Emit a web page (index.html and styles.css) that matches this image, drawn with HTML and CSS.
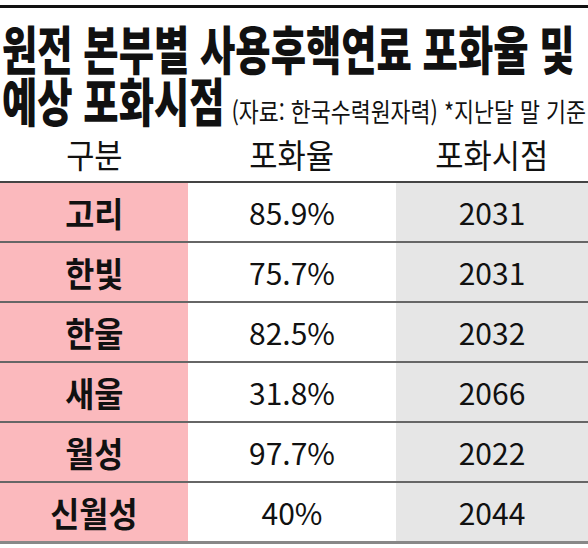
FILE: index.html
```html
<!DOCTYPE html>
<html lang="ko">

<head>
  <meta charset="UTF-8">
  <meta name="viewport" content="width=device-width, initial-scale=1.0">
  <link rel="stylesheet" href="styles.css">
</head>

<body>
  <div class="top-rule"></div>

  <h1 class="title">
    <span class="title-line">원전 본부별 사용후핵연료 포화율 및</span>
    <span class="title-line">예상 포화시점<span class="source">(자료: 한국수력원자력) *지난달 말 기준</span></span>
  </h1>

  <table class="stats">
    <colgroup>
      <col class="col-name">
      <col class="col-rate">
      <col class="col-year">
    </colgroup>
    <thead>
      <tr>
        <th><span class="head">구분</span></th>
        <th><span class="head">포화율</span></th>
        <th><span class="head">포화시점</span></th>
      </tr>
    </thead>
    <tbody>
      <tr>
        <td class="name"><span class="label">고리</span></td>
        <td class="rate">85.9%</td>
        <td class="year">2031</td>
      </tr>
      <tr>
        <td class="name"><span class="label">한빛</span></td>
        <td class="rate">75.7%</td>
        <td class="year">2031</td>
      </tr>
      <tr>
        <td class="name"><span class="label">한울</span></td>
        <td class="rate">82.5%</td>
        <td class="year">2032</td>
      </tr>
      <tr>
        <td class="name"><span class="label">새울</span></td>
        <td class="rate">31.8%</td>
        <td class="year">2066</td>
      </tr>
      <tr>
        <td class="name"><span class="label">월성</span></td>
        <td class="rate">97.7%</td>
        <td class="year">2022</td>
      </tr>
      <tr>
        <td class="name"><span class="label">신월성</span></td>
        <td class="rate">40%</td>
        <td class="year">2044</td>
      </tr>
    </tbody>
  </table>
</body>

</html>
```

FILE: styles.css
```css
body {
  margin: 0;
  width: 588px;
  overflow: hidden;
  background-color: #fff;
  color: #111;
  font-family: "Noto Sans CJK KR", "Noto Sans", sans-serif;
}

.top-rule {
  height: 3px;
  margin-top: 5px;
  background-color: #111;
}

.title {
  margin: 0;
  padding-top: 14px;
  font-size: 52px;
  font-weight: 900;
  line-height: 52px;
}

.title-line {
  display: block;
  white-space: nowrap;
  margin-left: 2px;
  transform: scaleX(0.738);
  transform-origin: left center;
}

.source {
  display: inline-block;
  margin-left: 9px;
  font-size: 26px;
  font-weight: 400;
  line-height: 26px;
  transform: scaleX(1.13);
  transform-origin: left center;
}

.stats {
  width: 588px;
  border-collapse: collapse;
  table-layout: fixed;
}

.col-name {
  width: 188px;
}

.col-rate {
  width: 208px;
}

.col-year {
  width: 192px;
}

.stats th {
  height: 55px;
  padding: 0;
  font-weight: 400;
  font-size: 33px;
  border-bottom: 2px solid #444;
}

.stats td {
  height: 58px;
  padding: 0;
  text-align: center;
  font-size: 30px;
  border-bottom: 2px solid #666;
}

.head,
.label {
  display: inline-block;
  transform: scaleX(0.93);
}

.stats .name {
  background-color: #fbb9bd;
  font-size: 34px;
  font-weight: 700;
}

.stats .year {
  background-color: #e6e6e6;
}

.stats tbody tr:last-child td {
  border-bottom: 3px solid #888;
}
```
